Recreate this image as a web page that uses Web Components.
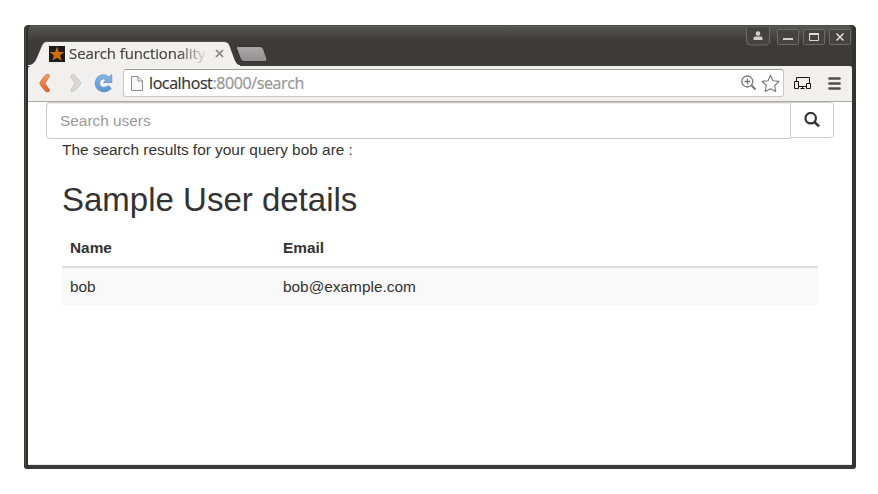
<!DOCTYPE html>
<html lang="en">
<head>
<meta charset="utf-8">
<title>Search functionality</title>
<style>
html, body { margin: 0; background: #fff; }
body { padding: 25px 22px 25px 24px; box-sizing: border-box; height: 494px; overflow: hidden; }
</style>
</head>
<body>
<browser-window>
  <window-titlebar slot="title"><browser-tab>Search functionality</browser-tab></window-titlebar>
  <browser-toolbar slot="toolbar"><span slot="host">localhost</span><span slot="path">:8000/search</span></browser-toolbar>
  <user-search></user-search>
  <search-results query="bob"></search-results>
</browser-window>
<script>
function define(name, html) {
  const t = document.createElement('template');
  t.innerHTML = html;
  customElements.define(name, class extends HTMLElement {
    constructor() {
      super();
      this.attachShadow({ mode: 'open' }).append(t.content.cloneNode(true));
    }
    connectedCallback() {
      const q = this.shadowRoot.querySelector('.query');
      if (q) q.textContent = this.getAttribute('query');
    }
  });
}

define('browser-window', `
<style>
:host { display: flex; flex-direction: column; box-sizing: border-box; width: 832px; height: 444px;
  padding: 0 4px 4px; border-radius: 5px 5px 4px 4px;
  background: linear-gradient(#40403c 0, #5a5954 1px, #53524d 3px, #3c3b37 17px, #3c3b37 100%);
  box-shadow: inset 1px 0 #34332f, inset 2px 0 #52514d, inset 4px 0 #2e2d2a, inset -1px 0 #34332f, inset -4px 0 #35342f; }
main { flex: 1; background: #fff; padding: 0 18px; border-bottom: 1px solid #e3e6e8; }
</style>
<slot name="title"></slot><slot name="toolbar"></slot><main><slot></slot></main>`);

define('window-titlebar', `
<style>
:host { display: flex; height: 41px; justify-content: space-between; align-items: flex-start; }
.tabs { display: flex; height: 41px; align-items: flex-end; }
.new { width: 34px; height: 17px; margin: 0 0 3px -6px; }
svg { display: block; }
.buttons { display: flex; margin-right: -1px; }
</style>
<div class="tabs"><slot></slot>
<svg class="new" viewBox="0 0 34 17"><defs><linearGradient id="g" x2="0" y2="1"><stop stop-color="#aaa8a8"/><stop offset="1" stop-color="#929090"/></linearGradient></defs><path d="M3.500 .5H26Q28.500 .5 29.500 3L33 13Q33.500 15.500 31 15.500H10Q7.500 15.500 6.500 13L2.500 2.500Q2 .5 3.500 .5Z" fill="url(#g)" stroke="#34332f"/></svg></div>
<svg class="buttons" width="108" height="24" viewBox="0 0 108 24">
<g fill="#44433f" stroke="#6c6b67"><path d="M1.500 2.500V16Q1.500 20 5.500 20H20Q24.500 20 24.500 16V2.500"/><rect x="32.500" y="4.500" width="21" height="15" rx="1"/><rect x="58.500" y="4.500" width="21" height="15" rx="1"/><rect x="84.500" y="4.500" width="21" height="15" rx="1"/></g>
<g fill="#d2d0cc"><circle cx="13" cy="8.600" r="2.300"/><path d="M8.500 15V13Q8.500 11.500 10.200 11.500H15.800Q17.500 11.500 17.500 13V15Z"/><path d="M38 13h10v2H38z"/></g>
<g fill="none" stroke="#dfdbd2"><path d="M64.500 8.500h9v7h-9z"/><path d="M64 9h10" stroke-width="2"/><path d="M91.500 8.500l7 7m0-7l-7 7" stroke-width="1.600"/></g>
</svg>`);

define('browser-tab', `
<style>
:host { display: grid; width: 212px; height: 25px; flex: none; }
.shape, .row { grid-area: 1 / 1; }
.row { z-index: 1; display: flex; align-items: center; padding: 0 12px 0 21px; height: 25px; }
.title { font: 15px/25px "Open Sans", sans-serif; color: #444; white-space: nowrap; width: 138px; height: 25px; margin-left: 4px; overflow: hidden;
 letter-spacing: -.1px; -webkit-text-stroke: .2px; -webkit-mask-image: linear-gradient(90deg, #000 78%, transparent 101%); }
.close { margin-left: 8px; }
svg { display: block; flex: none; }
</style>
<svg class="shape" width="212" height="25"><path d="M0 25V24Q6 23.500 8 18L14 4Q15.500 .5 19 .5H196Q200 .5 201.500 4L207 19Q209 24 212 24V25Z" fill="#f1f0ee" stroke="#282824" stroke-width=".6"/><path d="M0 24.500H212" stroke="#f1f0ee"/></svg>
<div class="row"><svg width="16" height="16"><path fill="#1c1c1c" d="M0 0h16v16H0z"/><path fill="#cb6d08" d="M8 .8L9.900 5.900 15.300 6.100 11.100 9.500 12.600 14.700 8 11.700 3.400 14.700 4.900 9.500.7 6.100 6.100 5.900Z"/></svg><div class="title"><slot></slot></div>
<svg class="close" width="9" height="9"><path d="M1 1l7 7M8 1L1 8" stroke="#858483" stroke-width="1.700"/></svg></div>`);

define('browser-toolbar', `
<style>
:host { display: flex; align-items: center; height: 36px; box-sizing: border-box; padding: 0 10px 1px 8px; background: #f1f0ee; border-bottom: 1px solid #aaa9a7; border-radius: 3px 2px 0 0; }
svg { display: block; flex: none; }
.box { flex: none; box-sizing: border-box; width: 661px; height: 28px; margin: 0 8px 0 7px; display: flex; align-items: center; padding: 0 3px 0 7px; background: #fff; border: 1px solid #c9c8c6; border-radius: 3px; border-top-color: #9f9e9c; }
.url { flex: 1; margin-left: 6px; font: 16px/26px "Open Sans", sans-serif; letter-spacing: -.4px; -webkit-text-stroke: .2px; color: #333; white-space: nowrap; }
.path { color: #959595; }
</style>
<svg width="80" height="34" viewBox="0 0 80 34"><defs><linearGradient id="o" x2="0" y2="1"><stop stop-color="#f6a366"/><stop offset="1" stop-color="#e55b25"/></linearGradient><linearGradient id="b" x2="0" y2="1"><stop stop-color="#8ab9e6"/><stop offset="1" stop-color="#5b94cf"/></linearGradient></defs>
<path d="M10.500 8.500Q13 7.500 13.500 10L9 17.300 13.500 24Q13.500 26.500 10.500 25.800L8.800 24.500 4.200 18.600Q3.500 17.400 4.200 16.200L8.600 10Z" fill="url(#o)" stroke="#c7663a" stroke-width=".8"/>
<path d="M36.500 8.500Q34.500 9 35 11L39.200 17.300 35 23.500Q34.500 26 37 25.500L39 24.500 44.500 18.500Q45.300 17.400 44.500 16L39 9.700Z" fill="#d9d8d7" stroke="#c3c2c1" stroke-width=".8"/>
<path d="M75.800 8.500V16.500H67.500L70.300 13.800Q67.500 11.800 65 13.800 62.600 16 64 19.500 66.300 23 70.300 20.800L73 19.700 75.200 22.700Q71.500 26.500 66.500 25.800 59.200 24 59.200 17.300 59.700 10 66.500 8.700 70 8.300 72.800 11Z" fill="url(#b)" stroke="#5288c2" stroke-width=".7"/></svg>
<div class="box">
<svg width="12" height="16" viewBox="0 0 12 16"><path d="M.5 1.500H7L11.500 6V15.500H.5Z M7 1.500V6H11.500" fill="#f8f8f8" stroke="#8b8b8b"/></svg>
<div class="url"><slot name="host"></slot><span class="path"><slot name="path"></slot></span></div>
<svg width="40" height="24" viewBox="0 0 40 24" fill="none" stroke="#777"><circle cx="7.300" cy="10.500" r="5.500" stroke-width="1.300"/><path d="M4.500 10.500h6M7.500 7.500v6" stroke-width="1.300"/><path d="M11.500 14.500l4 4" stroke-width="2"/><path d="M30.500 4.300L32.900 9.700 39 10.400 34.700 14.500 35.800 20.500 30.500 17.700 25.200 20.500 26.300 14.500 22 10.400 28.100 9.700Z" stroke-width="1.100" stroke-linejoin="round"/></svg>
</div>
<svg width="50" height="34" viewBox="0 0 50 34"><g fill="none" stroke="#161616"><path d="M4.500 15V11.500H17.500V17"/><path d="M2.500 15.500h4v7h-4zM14.500 17.500h4v5h-4zM6.500 20.500H14.500M8.500 22.500h4M10.500 20v2" fill="#f1f0ee"/></g><path d="M37.500 12.500h10M37.500 17.500h10M37.500 22.500h10" stroke="#4e4d4b" stroke-width="2.700" stroke-linecap="round"/></svg>`);

define('user-search', `
<style>
:host { display: flex; height: 37px; font: 15.4px/22px "Liberation Sans", Arial, sans-serif; }
.field { box-sizing: border-box; width: 745px; height: 37px; padding: 7px 13px; border: 1px solid #ccc; border-radius: 4px 0 0 4px; color: #999; box-shadow: inset 0 1px 1px rgba(0,0,0,.08); }
.button { box-sizing: border-box; width: 44px; height: 36px; margin-left: -1px; border: 1px solid #ccc; border-radius: 0 4px 4px 0; background: #fff; display: grid; place-items: center; }
</style>
<div class="field">Search users</div>
<div class="button"><svg width="16" height="16"><circle cx="6.700" cy="6.200" r="5.200" fill="none" stroke="#333" stroke-width="2.200"/><path d="M10.600 10.100l4.400 4.300" stroke="#333" stroke-width="2.700"/></svg></div>`);

define('search-results', `
<style>
:host { display: block; padding: 0 16px; font: 15.4px/22px "Liberation Sans", Arial, sans-serif; color: #333; }
h2 { font-size: 33px; line-height: 36px; margin: 21px 0 11px; font-weight: 400; }
table { width: 756px; border-collapse: separate; border-spacing: 0; table-layout: fixed; }
th, td { text-align: left; padding: 8px; line-height: 22px; }
th:first-child { width: 197px; }
th { border-bottom: 2px solid #ddd; padding-bottom: 7px; }
td { background: #f9f9f9; padding-bottom: 7px; }
</style>
<div>The search results for your query <span class="query"></span> are :</div>
<h2>Sample User details</h2>
<table><thead><tr><th>Name</th><th>Email</th></tr></thead><tbody><tr><td>bob</td><td>bob@example.com</td></tr></tbody></table>`);
</script>
</body>
</html>
